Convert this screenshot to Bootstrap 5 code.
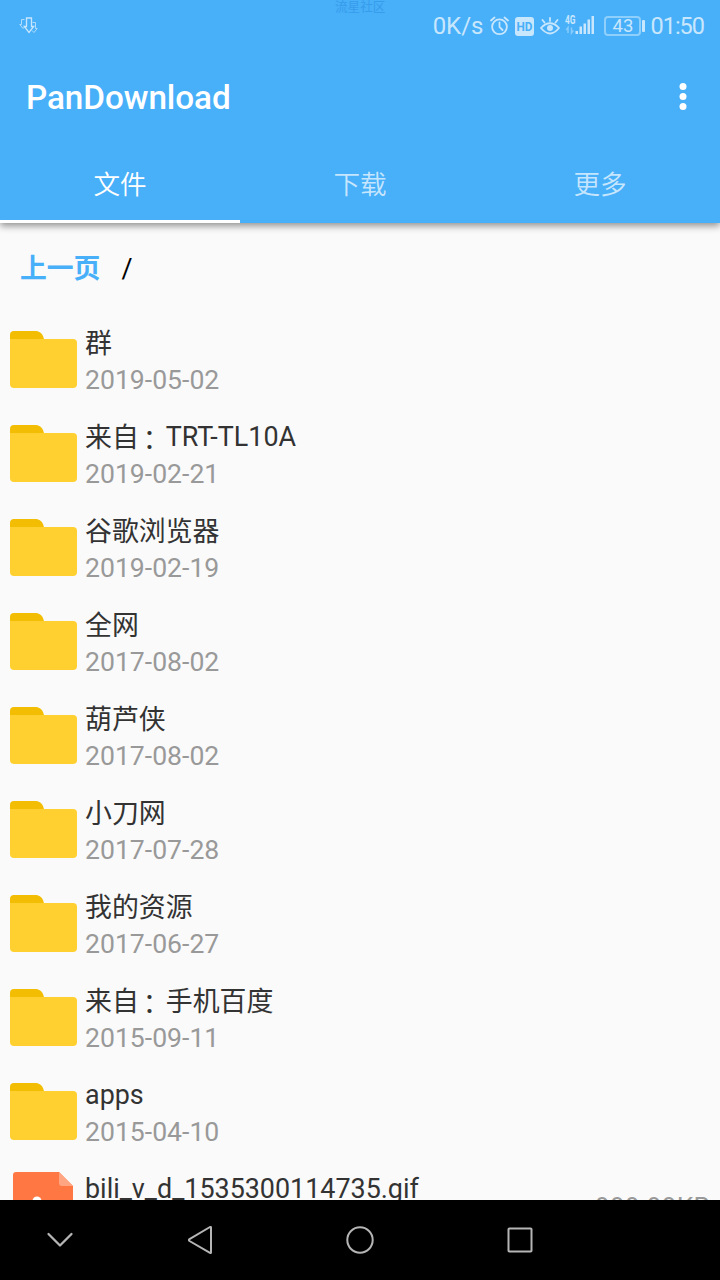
<!DOCTYPE html>
<html lang="zh-CN">
<head>
<meta charset="utf-8">
<meta name="viewport" content="width=device-width, initial-scale=1">
<title>PanDownload</title>
<link href="https://cdn.jsdelivr.net/npm/bootstrap@5.3.0/dist/css/bootstrap.min.css" rel="stylesheet">
<style>
  body { font-family: Roboto, "Noto Sans CJK SC", sans-serif; background: #fafafa; color: #333; }
  svg { display: block; flex: none; }
  .screen { height: 1280px; }
  .app-head { background: #48aff9; height: 223px; box-shadow: 0 3px 7px rgba(0,0,0,.42); z-index: 1; }
  .status { height: 50px; color: #c8e7fd; font-size: 24px; line-height: 50px; padding: 1px 16px 0 19px; }
  .watermark { left: 335px; top: 0; font-size: 12.6px; line-height: 13px; color: #369cec; }
  .clock { font-size: 23.500px; letter-spacing: -1px; margin: 0 0 0 5px; }
  .battery { width: 37px; height: 20px; border: 2px solid #8fcffb; border-radius: 4px; font-size: 18.5px; line-height: 17px; }
  .battery-tip { width: 3px; height: 12px; background: #c8e7fd; border-radius: 1px; margin-left: 1px; }
  .title-bar { height: 97px; padding: 0 32px 3px 26px; }
  .app-name { font-size: 33.3px; font-weight: 500; line-height: 40px; letter-spacing: -.08px; padding-top: 2px; }
  .tabs { height: 76px; }
  .tabs .nav-link { height: 76px; padding: 0; font-size: 26.6px; line-height: 75px; color: rgba(255,255,255,.7); border-bottom: 3px solid transparent; font-weight: 350; border-radius: 0; }
  .tabs .nav-link.active { color: #fff; border-color: #fff; }
  .crumbs { height: 90px; padding: 0 20px; font-size: 26.8px; line-height: 92px; gap: 21px; color: #000; }
  .crumbs a { color: #48aff9; }
  .file-row { height: 94px; padding: 0 10px; font-size: 26.6px; line-height: 37px; color: #333; }
  .file-icon { width: 67px; height: 57px; margin: 18px 8px 0 0; }
  .file-text { padding-top: 11px; white-space: nowrap; }
  .file-text > div { height: 37px; }
  .file-text > .file-name { font-size: 26.9px; padding-top: 1px; }
  .zh { vertical-align: -1px; line-height: 1; }
  .colon { display: inline-block; width: 27px; text-indent: 4px; line-height: 1; vertical-align: -2px; }
  .meta { color: #999; }
  .sys-nav { height: 80px; background: #000; }
  .sys-nav > div { width: 160px; }
  .sys-nav > div:first-child { width: 120px; }
  .sys-nav svg { width: 40px; height: 40px; margin: 0 auto; fill: none; stroke: #b5b5b5; stroke-width: 2; stroke-linejoin: round; stroke-linecap: round; }
</style>
</head>
<body>
<svg width="0" height="0" class="d-none">
  <symbol id="folder" viewBox="0 0 67 57">
    <path fill="#f2bd02" d="M4 0h22c4 0 7.500 3.500 8 9H0V4q0-4 4-4z"/>
    <path fill="#ffd030" d="M0 8h63q4 0 4 4v41q0 4-4 4H4q-4 0-4-4z"/>
  </symbol>
</svg>
<div class="screen d-flex flex-column overflow-hidden">
  <header class="app-head position-relative flex-shrink-0">
    <span class="watermark position-absolute">流星社区</span>
    <div class="status d-flex align-items-center">
      <svg width="19" height="17" viewBox="0 0 19 17" fill="none" stroke="#c8e7fd" stroke-width="1">
        <path d="M2.500 2.500h3M2.500 2.500v5H.8L4 11.500l2-2M16.500 5.500h-3M16.500 5.500v6h1.700L15 15.500l-2-2" opacity=".8"/>
        <path d="M7.500 1h5v8.500h2.200L10 15.500 5.300 9.500h2.200z" stroke-width="1.300"/>
      </svg>
      <div class="d-flex align-items-center ms-auto">
        <span style="margin-right:7px">0K/s</span>
        <svg width="19" height="20" viewBox="0 0 19 20" fill="none" stroke="#c8e7fd" stroke-width="1.800" stroke-linecap="round"><circle cx="9.500" cy="10.800" r="7.400"/><path d="M9.500 6.500v4.500l3 3M1 4.500 4.500 1.500M18 4.500 14.500 1.500"/></svg>
        <svg style="margin:0 6px 0 5px" width="20" height="20" viewBox="0 0 20 20"><rect x="1" y="1" width="19" height="19" rx="3" fill="#c8e7fd"/><text x="10.500" y="14.500" text-anchor="middle" font-family="Roboto" font-weight="700" font-size="12" textLength="16" lengthAdjust="spacingAndGlyphs" fill="#48aff9">HD</text></svg>
        <svg width="20" height="20" viewBox="0 0 20 20" fill="none" stroke="#c8e7fd" stroke-width="1.800" stroke-linecap="round"><path d="M1 12q9-9.500 18 0-9 11-18 0zM10 2v3M2.500 4l2 2.500M17.500 4l-2 2.500"/><circle cx="10" cy="12" r="3" fill="#c8e7fd" stroke="none"/></svg>
        <svg style="margin:0 9px 0 5px" width="30" height="24" viewBox="0 0 30 24"><text x="0" y="10" font-family="Roboto" font-weight="700" font-size="12" textLength="10.500" lengthAdjust="spacingAndGlyphs" fill="#c8e7fd">4G</text><g fill="#c8e7fd"><rect x="10.500" y="17" width="2.500" height="3"/><rect x="14.500" y="12.500" width="2.500" height="7.500"/><rect x="18.500" y="9.500" width="2.500" height="10.500"/><rect x="22.500" y="5.500" width="2.500" height="14.500"/><rect x="26.500" y="2" width="2.500" height="18"/></g><path d="M3 19v-5.500L1.200 16M6.500 13.500V19l1.800-2.500" fill="none" stroke="#86cbfb" stroke-width="1.500"/></svg>
        <span class="battery text-center">43</span><span class="battery-tip"></span>
        <span class="clock">01:50</span>
      </div>
    </div>
    <div class="title-bar d-flex align-items-center justify-content-between text-white">
      <span class="app-name">PanDownload</span>
      <svg width="10" height="28" viewBox="0 0 10 28" fill="#fff"><circle cx="5" cy="3.500" r="3.500"/><circle cx="5" cy="13.500" r="3.500"/><circle cx="5" cy="23.500" r="3.500"/></svg>
    </div>
    <nav class="tabs nav nav-fill">
      <a class="nav-link nav-item col-4 active" href="#">文件</a>
      <a class="nav-link nav-item col-4" href="#">下载</a>
      <a class="nav-link nav-item col-4" href="#">更多</a>
    </nav>
  </header>
  <main class="flex-grow-1 overflow-hidden" style="min-height:0">
    <div class="crumbs d-flex"><a class="fw-bold text-decoration-none" href="#">上一页</a><span>/</span></div>
    <div class="list-group list-group-flush">
      <div class="file-row d-flex"><svg class="file-icon"><use href="#folder"/></svg><div class="file-text"><div class="file-name"><span class="zh">群</span></div><div class="meta">2019-05-02</div></div></div>
      <div class="file-row d-flex"><svg class="file-icon"><use href="#folder"/></svg><div class="file-text"><div class="file-name"><span class="zh">来自<span class="colon">：</span></span>TRT-TL10A</div><div class="meta">2019-02-21</div></div></div>
      <div class="file-row d-flex"><svg class="file-icon"><use href="#folder"/></svg><div class="file-text"><div class="file-name"><span class="zh">谷歌浏览器</span></div><div class="meta">2019-02-19</div></div></div>
      <div class="file-row d-flex"><svg class="file-icon"><use href="#folder"/></svg><div class="file-text"><div class="file-name"><span class="zh">全网</span></div><div class="meta">2017-08-02</div></div></div>
      <div class="file-row d-flex"><svg class="file-icon"><use href="#folder"/></svg><div class="file-text"><div class="file-name"><span class="zh">葫芦侠</span></div><div class="meta">2017-08-02</div></div></div>
      <div class="file-row d-flex"><svg class="file-icon"><use href="#folder"/></svg><div class="file-text"><div class="file-name"><span class="zh">小刀网</span></div><div class="meta">2017-07-28</div></div></div>
      <div class="file-row d-flex"><svg class="file-icon"><use href="#folder"/></svg><div class="file-text"><div class="file-name"><span class="zh">我的资源</span></div><div class="meta">2017-06-27</div></div></div>
      <div class="file-row d-flex"><svg class="file-icon"><use href="#folder"/></svg><div class="file-text"><div class="file-name"><span class="zh">来自<span class="colon">：</span>手机百度</span></div><div class="meta">2015-09-11</div></div></div>
      <div class="file-row d-flex"><svg class="file-icon"><use href="#folder"/></svg><div class="file-text"><div class="file-name">apps</div><div class="meta">2015-04-10</div></div></div>
      <div class="file-row d-flex">
        <svg width="67" height="67" viewBox="0 0 67 67" style="margin:13px 8px 0 0"><path fill="#ff7843" d="M6 0h43l14 14v50q0 3-3 3H6q-3 0-3-3V3q0-3 3-3z"/><path fill="#ffa582" d="M49 0l14 14H52q-3 0-3-3z"/><circle cx="27" cy="29" r="4.500" fill="#fff"/></svg>
        <div class="file-text"><div class="file-name">bili_v_d_1535300114735.gif</div></div>
        <div class="meta ms-auto" style="padding-top:29px">999.99KB</div>
      </div>
    </div>
  </main>
  <footer class="sys-nav d-flex align-items-center flex-shrink-0">
    <div><svg viewBox="0 0 40 40"><path d="M8.500 14 20 25.500 31.500 14" stroke-width="2.300"/></svg></div>
    <div><svg viewBox="0 0 40 40"><path d="M31 7.500v25q0 .8-1 .3L9.500 21q-1.200-1 0-1.800L30 7q1-.3 1 .5z"/></svg></div>
    <div><svg viewBox="0 0 40 40"><circle cx="20" cy="20" r="12.700"/></svg></div>
    <div><svg viewBox="0 0 40 40"><rect x="8.500" y="8.500" width="23" height="23" rx=".8"/></svg></div>
  </footer>
</div>
<script src="https://cdn.jsdelivr.net/npm/bootstrap@5.3.0/dist/js/bootstrap.bundle.min.js"></script>
</body>
</html>
